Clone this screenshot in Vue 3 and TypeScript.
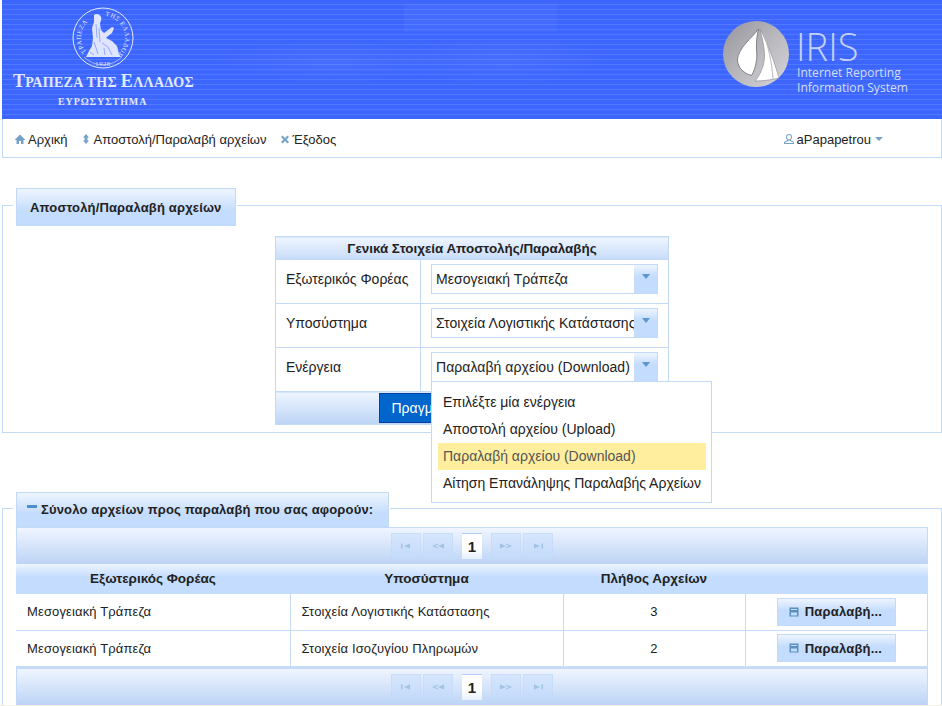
<script setup lang="ts">
interface NavItem {
  label: string;
  icon: string;
}

interface FormRow {
  label: string;
  value: string;
  open?: boolean;
}

interface FileRow {
  agency: string;
  subsystem: string;
  count: number;
}

interface PageButton {
  name: string;
  path: string;
}

const navItems: NavItem[] = [
  { label: 'Αρχική', icon: 'M8 3.500 3 8.500v.5h1.500v4H7v-3h2v3h2.500V9H13v-.5z' },
  { label: 'Αποστολή/Παραλαβή αρχείων', icon: 'M8 3 11 6.500H9.500v3H11L8 13 5 9.500h1.500v-3H5z' },
  { label: 'Έξοδος', icon: 'M5.500 4.500 8 7l2.500-2.500 1.500 1.500L9.500 8.500 12 11l-1.500 1.500L8 10l-2.500 2.500L4 11l2.500-2.500L4 6z' },
];

const formRows: FormRow[] = [
  { label: 'Εξωτερικός Φορέας', value: 'Μεσογειακή Τράπεζα' },
  { label: 'Υποσύστημα', value: 'Στοιχεία Λογιστικής Κατάστασης' },
  { label: 'Ενέργεια', value: 'Παραλαβή αρχείου (Download)', open: true },
];

const actions = [
  'Επιλέξτε μία ενέργεια',
  'Αποστολή αρχείου (Upload)',
  'Παραλαβή αρχείου (Download)',
  'Αίτηση Επανάληψης Παραλαβής Αρχείων',
];

const files: FileRow[] = [
  { agency: 'Μεσογειακή Τράπεζα', subsystem: 'Στοιχεία Λογιστικής Κατάστασης', count: 3 },
  { agency: 'Μεσογειακή Τράπεζα', subsystem: 'Στοιχεία Ισοζυγίου Πληρωμών', count: 2 },
];

// Paginator icons, all in a 16x16 box
const leftButtons: PageButton[] = [
  { name: 'first', path: 'M3 5.500h1.500v5H3z M12 5.500v5L6 8z' },
  { name: 'prev', path: 'M8 5.500 2 8l6 2.500V9.500L5 8l3-1.500z M14 5.500v5L8 8z' },
];
const rightButtons: PageButton[] = [
  { name: 'next', path: 'M2 5.500v5L8 8z M8 5.500 14 8l-6 2.500V9.500L11 8 8 6.500z' },
  { name: 'last', path: 'M4 5.500v5L10 8z M11.500 5.500H13v5h-1.500z' },
];
const paginators = ['top', 'bottom'];
</script>

<template>
  <div class="page">
    <header class="banner">
      <svg class="bank-logo" viewBox="10 0 190 119" width="190" height="119">
        <defs>
          <path id="seal-ring" d="M87.600 53.400A22 22 0 1 1 118.400 53.400" />
        </defs>
        <circle cx="103" cy="38" r="30" fill="none" stroke="#e4eaff" stroke-width="1" />
        <path d="M84 57A27 27 0 0 0 122 57" fill="none" stroke="#e4eaff" stroke-width="0.600" />
        <text class="seal-text"><textPath href="#seal-ring" startOffset="2">ΤΡΑΠΕΖΑ</textPath></text>
        <text class="seal-text"><textPath href="#seal-ring" startOffset="54">ΤΗΣ ΕΛΛΑΔΟΣ</textPath></text>
        <text class="seal-text" x="103" y="66" text-anchor="middle">1928</text>
        <!-- seated figure -->
        <path
          fill="#dfe5ff"
          d="M94 15C96 13 100 14 101 17 102 20 100 22 100 24L101 30 104 33 108 30 112 27 114 28 112 33 108 36 106 38 112 41 117 46 119 54 121 57H86L89 51 92 46 93 38 92 28 94 22z"
        />
        <path
          fill="none"
          stroke="#6f8fff"
          stroke-width="0.700"
          d="M96 24 97 38M99 28 100 42M94 42 98 54M102 43 108 47 112 55M104 48 105 55M90 52 94 55"
        />
        <text class="bank-name" x="13" y="87">
          <tspan class="cap">Τ</tspan>ΡΑΠΕΖΑ ΤΗΣ <tspan class="cap">Ε</tspan>ΛΛΑΔΟΣ
        </text>
        <text class="bank-sub" x="58" y="105">ΕΥΡΩΣΥΣΤΗΜΑ</text>
      </svg>

      <svg class="iris-logo" viewBox="715 0 200 119" width="200" height="119">
        <defs>
          <linearGradient id="iris-disc" x1="0" y1="0" x2="1" y2="1">
            <stop offset="0" stop-color="#95959b" />
            <stop offset="1" stop-color="#d8d8dc" />
          </linearGradient>
        </defs>
        <circle cx="756" cy="54" r="33" fill="url(#iris-disc)" />
        <path
          fill="#fff"
          stroke="#6e6e74"
          stroke-width="0.800"
          d="M758.500 29C752 38 738 48 737.500 60 737.500 68 745 74 751.500 75.500 756 68 757.500 58 756.500 50 756 42 757 35 758.500 29z"
        />
        <path
          fill="#fff"
          stroke="#85858b"
          stroke-width="0.600"
          d="M760 29C766 40 774 60 779 78 771 80 762 81 755 81 761 74 765 64 764.500 54 764 44 761.500 36 760 29z"
        />
        <path fill="none" stroke="#b8b8be" stroke-width="1" d="M763.500 33C768 46 772 62 773 79" />
        <text class="iris-name" x="796" y="61">IRIS</text>
        <text class="iris-line" x="797" y="77">Internet Reporting</text>
        <text class="iris-line" x="797" y="92">Information System</text>
      </svg>
    </header>

    <nav class="menubar">
      <a v-for="item in navItems" :key="item.label" class="menu-item">
        <svg class="menu-icon" viewBox="0 0 16 16" width="16" height="16"><path :d="item.icon" /></svg>
        {{ item.label }}
      </a>
      <a class="menu-item user">
        <svg class="menu-icon" viewBox="0 0 16 16" width="16" height="16">
          <path
            fill-rule="evenodd"
            d="M8 3a3 3 0 0 1 3 3c0 1.500-.8 2.500-1.500 3l3.500 2v2H3v-2l3.500-2C5.800 8.500 5 7.500 5 6a3 3 0 0 1 3-3zm0 1a2 2 0 0 0-2 2c0 1.300.8 2.300 2 2.500 1.200-.2 2-1.200 2-2.500a2 2 0 0 0-2-2zM8 9.500 4 11.500V12h8v-.5z"
          />
        </svg>
        aPapapetrou
        <svg class="menu-icon" viewBox="0 0 16 16" width="16" height="16"><path d="M4 6h8l-4 4z" /></svg>
      </a>
    </nav>

    <section class="panel first">
      <h2 class="legend">Αποστολή/Παραλαβή αρχείων</h2>
      <div class="panel-body">
        <table class="form-table">
          <colgroup>
            <col class="col-label" />
            <col />
          </colgroup>
          <thead>
            <tr><th colspan="2">Γενικά Στοιχεία Αποστολής/Παραλαβής</th></tr>
          </thead>
          <tbody>
            <tr v-for="row in formRows" :key="row.label">
              <td class="label-cell">{{ row.label }}</td>
              <td class="field-cell">
                <div class="select">
                  <span class="select-label">{{ row.value }}</span>
                  <span class="select-trigger"><i class="caret"></i></span>
                  <ul v-if="row.open" class="select-panel">
                    <li
                      v-for="action in actions"
                      :key="action"
                      :class="['select-item', { active: action === row.value }]"
                    >
                      {{ action }}
                    </li>
                  </ul>
                </div>
              </td>
            </tr>
          </tbody>
          <tfoot>
            <tr>
              <td colspan="2"><button class="primary" type="button">Πραγματοποίηση</button></td>
            </tr>
          </tfoot>
        </table>
      </div>
    </section>

    <section class="panel second">
      <h2 class="legend small">
        <i class="collapse-mark"></i>
        Σύνολο αρχείων προς παραλαβή που σας αφορούν:
      </h2>
      <div class="panel-body">
        <template v-for="(place, index) in paginators" :key="place">
          <div class="paginator">
            <span v-for="b in leftButtons" :key="b.name" class="page-btn">
              <svg viewBox="0 0 16 16" width="16" height="16"><path :d="b.path" /></svg>
            </span>
            <span class="page-num">1</span>
            <span v-for="b in rightButtons" :key="b.name" class="page-btn">
              <svg viewBox="0 0 16 16" width="16" height="16"><path :d="b.path" /></svg>
            </span>
          </div>
          <table v-if="index === 0" class="files">
            <colgroup>
              <col class="col-agency" />
              <col class="col-subsystem" />
              <col class="col-count" />
              <col />
            </colgroup>
            <thead>
              <tr>
                <th>Εξωτερικός Φορέας</th>
                <th>Υποσύστημα</th>
                <th>Πλήθος Αρχείων</th>
                <th></th>
              </tr>
            </thead>
            <tbody>
              <tr v-for="file in files" :key="file.subsystem">
                <td>{{ file.agency }}</td>
                <td>{{ file.subsystem }}</td>
                <td class="center">{{ file.count }}</td>
                <td class="center">
                  <button class="download" type="button">
                    <svg viewBox="0 0 16 16" width="16" height="16">
                      <path d="M3.500 3.500h9v9h-9z M5 5h6v1H5z M5 8.500h6v3H5z" fill-rule="evenodd" />
                    </svg>
                    Παραλαβή...
                  </button>
                </td>
              </tr>
            </tbody>
          </table>
        </template>
      </div>
    </section>
    <div class="strip"></div>
  </div>
</template>

<style>
html,
body {
  margin: 0;
  background: #fff;
  overflow: hidden;
}
</style>

<style scoped>
.page {
  box-sizing: border-box;
  width: 942px;
  height: 706px;
  padding-left: 2px;
  overflow: hidden;
  font-family: 'Liberation Sans', Arial, sans-serif;
  font-size: 14px;
  color: #222;
  display: flex;
  flex-direction: column;
}

/* Banner */
.banner {
  flex: none;
  height: 119px;
  display: flex;
  justify-content: space-between;
  padding: 0 27px 0 8px;
  background:
    linear-gradient(rgba(255, 255, 255, 0.035), rgba(255, 255, 255, 0.035)) 402px 4px / 153px 28px no-repeat,
    radial-gradient(ellipse 120px 22px at 330px 62px, rgba(255, 255, 255, 0.05), transparent),
    radial-gradient(ellipse 110px 26px at 500px 60px, rgba(255, 255, 255, 0.05), transparent),
    repeating-linear-gradient(to bottom, transparent 0 4px, #5079ff 4px 5px),
    #3d66ff;
}

.bank-logo,
.iris-logo {
  flex: none;
  display: block;
}

.seal-text {
  font-family: 'Liberation Serif', serif;
  font-size: 6.500px;
  letter-spacing: 0.600px;
  fill: #e4eaff;
}

.bank-name {
  font-family: 'Liberation Serif', serif;
  font-weight: 700;
  font-size: 14px;
  letter-spacing: 0.350px;
  fill: #e2e8ff;
}

.bank-name .cap {
  font-size: 18px;
}

.bank-sub {
  font-family: 'Liberation Serif', serif;
  font-weight: 700;
  font-size: 10px;
  letter-spacing: 0.900px;
  fill: #e2e8ff;
}

.iris-name {
  font-family: 'Open Sans', sans-serif;
  font-weight: 300;
  font-size: 38px;
  fill: #c4d2f6;
}

.iris-line {
  font-family: 'Open Sans', sans-serif;
  font-size: 12.100px;
  fill: #d4def8;
}

/* Menu bar */
.menubar {
  flex: none;
  box-sizing: border-box;
  height: 39px;
  display: flex;
  align-items: center;
  gap: 10px;
  padding: 2px 54px 0 9px;
  background: #fff;
  border: 1px solid #c2d9f8;
  border-top: 0;
  font-size: 13px;
}

.menu-item {
  display: flex;
  align-items: center;
  color: #222;
}

.menu-item.user {
  margin-left: auto;
}

.menu-icon {
  flex: none;
  fill: #76a2c9;
}

/* Bordered panels with a title box sitting on the top border */
.panel {
  flex: none;
  box-sizing: border-box;
  width: 940px;
  border: 1px solid #c2d9f8;
}

.panel.first {
  margin-top: 47px;
  padding-bottom: 7px;
}

.panel.second {
  margin-top: 75px;
  border-bottom: 0;
}

.legend {
  box-sizing: border-box;
  width: fit-content;
  height: 38px;
  margin: -18px 0 0 13px;
  padding: 0 14px 0 13px;
  display: flex;
  align-items: center;
  border: 1px solid #c2d9f8;
  background: linear-gradient(#eef5ff, #c4dcfd 62%);
  box-shadow: -3px 0 #fff, 1px 0 #fff;
  font-size: 13px;
  font-weight: 700;
  color: #222;
  letter-spacing: 0.160px;
}

.legend.small {
  height: 35px;
  margin-top: -17px;
  padding: 0 15px 0 10px;
}

.collapse-mark {
  width: 10px;
  height: 3px;
  margin: -6px 4px 0 0;
  background: #4f8cc9;
}

.panel-body {
  margin: 0 13px;
}

.first .panel-body {
  padding-top: 10px;
}

/* Form table */
.form-table {
  width: 394px;
  margin: 0 auto;
  border-collapse: collapse;
  table-layout: fixed;
}

.col-label {
  width: 145px;
}

.form-table th {
  box-sizing: border-box;
  height: 23px;
  padding: 0;
  border: 1px solid #c2d9f8;
  background: linear-gradient(#eef5ff, #c8dcf8);
  font-size: 13.400px;
}

.form-table td {
  box-sizing: border-box;
  height: 44px;
  border: 1px solid #c2d9f8;
  vertical-align: top;
}

.label-cell {
  padding: 11px 0 0 10px;
}

.field-cell {
  padding: 4px 10px 0;
}

.form-table tfoot td {
  height: 33px;
  padding: 0;
  text-align: center;
  vertical-align: middle;
  background: linear-gradient(#eef5ff, #bcd4f5);
}

.primary {
  display: inline-block;
  vertical-align: middle;
  width: 187px;
  height: 30px;
  padding: 0 12px;
  border: 1px solid #0b3fa6;
  background: #0066cc;
  color: #fff;
  font: 14px 'Liberation Sans', Arial, sans-serif;
  text-align: left;
  white-space: nowrap;
  overflow: hidden;
}

/* Dropdown */
.select {
  position: relative;
  box-sizing: border-box;
  height: 30px;
  display: flex;
  border: 1px solid #c2d9f8;
  background: #fff;
}

.select-label {
  flex: 1;
  min-width: 0;
  padding-left: 4px;
  line-height: 28px;
  letter-spacing: 0.050px;
  white-space: nowrap;
  overflow: hidden;
}

.select-trigger {
  flex: none;
  width: 23px;
  display: flex;
  justify-content: center;
  padding-top: 9px;
  box-sizing: border-box;
  background: linear-gradient(#eef5ff, #c4dcfd 40%);
}

.caret {
  width: 0;
  height: 0;
  border-left: 4px solid transparent;
  border-right: 4px solid transparent;
  border-top: 5px solid #5b97d0;
}

.select-panel {
  position: absolute;
  top: 100%;
  left: -1px;
  z-index: 5;
  box-sizing: border-box;
  width: 281px;
  margin: 0;
  padding: 7px 5px 5px 6px;
  list-style: none;
  background: #fff;
  border: 1px solid #c2d9f8;
}

.select-item {
  height: 27px;
  line-height: 26px;
  padding-left: 5px;
  white-space: nowrap;
}

.select-item.active {
  background: #ffee9e;
  color: #555;
}

/* Data table */
.paginator {
  box-sizing: border-box;
  height: 37px;
  display: flex;
  justify-content: center;
  align-items: center;
  gap: 2px;
  background: linear-gradient(#f0f5ff, #bcd4f5);
  border: 1px solid #c2d9f8;
  border-bottom: 0;
}

.page-btn {
  box-sizing: border-box;
  width: 30px;
  height: 26px;
  display: flex;
  align-items: center;
  justify-content: center;
  background: rgba(196, 220, 253, 0.5);
  border: 1px solid rgba(194, 217, 248, 0.6);
}

.page-btn svg {
  fill: #6f9fc9;
  opacity: 0.45;
}

.page-num {
  box-sizing: border-box;
  width: 20px;
  height: 26px;
  margin: 0 7px;
  display: flex;
  align-items: center;
  justify-content: center;
  background: linear-gradient(#fff 60%, #e6f0fe);
  border-top: 1px solid #b4cff3;
  font-size: 15px;
  font-weight: 700;
}

.files {
  width: 100%;
  border-collapse: collapse;
  table-layout: fixed;
  font-size: 13px;
  letter-spacing: 0.140px;
}

.col-agency {
  width: 274px;
}

.col-subsystem {
  width: 273px;
}

.col-count {
  width: 182px;
}

.files th {
  box-sizing: border-box;
  height: 29px;
  padding: 0;
  background: linear-gradient(#eef5ff, #c4dcfd 45%);
  font-size: 13.500px;
  font-weight: 700;
  letter-spacing: 0;
}

.files td {
  box-sizing: border-box;
  height: 37px;
  padding: 0 0 0 11px;
  border: 1px solid #c5dbf7;
}

.files td:first-child {
  border-left: 0;
}

.files tbody tr:last-child td {
  border-bottom-width: 2px;
}

.files td.center {
  padding: 0;
  text-align: center;
}

.download {
  box-sizing: border-box;
  width: 119px;
  height: 28px;
  padding: 0 0 0 8px;
  display: inline-flex;
  align-items: center;
  gap: 3px;
  vertical-align: middle;
  border: 1px solid #c2d9f8;
  background: linear-gradient(#eef5ff, #c4dcfd 45%);
  color: #222;
  font: 700 13px 'Liberation Sans', Arial, sans-serif;
  letter-spacing: 0.200px;
}

.download svg {
  flex: none;
  fill: #5b8fbd;
}

.strip {
  flex: none;
  height: 2px;
  margin-left: -2px;
  background: #f3eedd;
}
</style>
